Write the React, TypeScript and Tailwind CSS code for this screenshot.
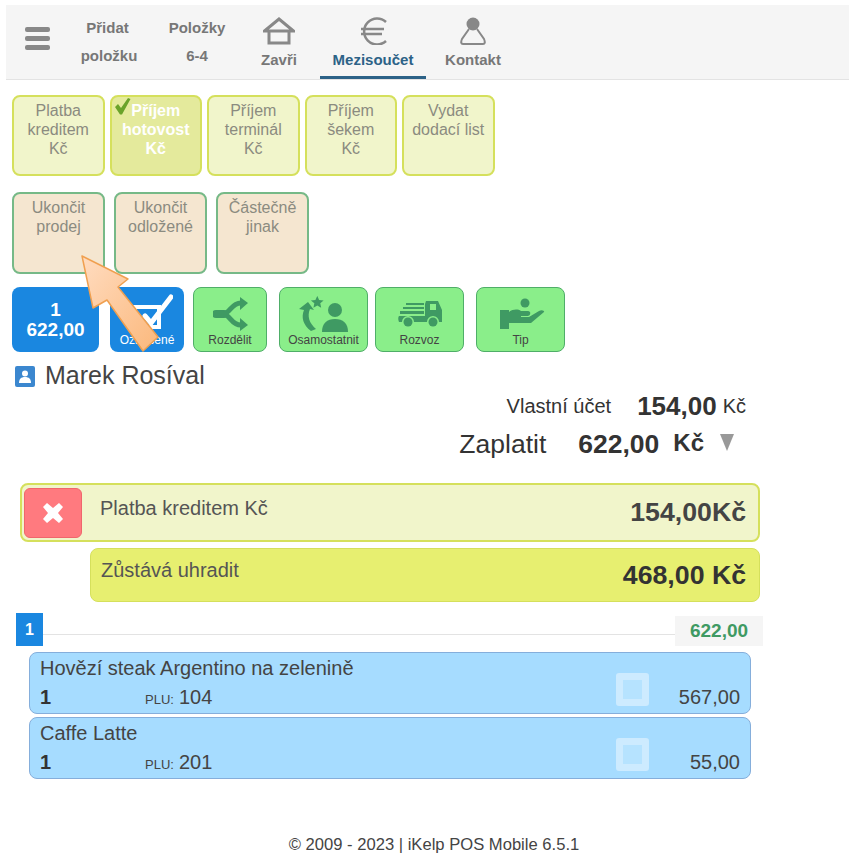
import React from "react";

const payButtons = [
  { lines: ["Platba", "kreditem", "Kč"], active: false },
  { lines: ["Příjem", "hotovost", "Kč"], active: true },
  { lines: ["Příjem", "terminál", "Kč"], active: false },
  { lines: ["Příjem", "šekem", "Kč"], active: false },
  { lines: ["Vydat", "dodací list"], active: false },
];

const finishButtons = [
  ["Ukončit", "prodej"],
  ["Ukončit", "odložené"],
  ["Částečně", "jinak"],
];

const SplitIcon = () => (
  <svg width="35" height="34" viewBox="0 0 35 34" fill="#3f9a63">
    <path d="M3 17H11" stroke="#3f9a63" strokeWidth="8" strokeLinecap="round" />
    <path d="M10 17C17 17 18 6 28 6M10 17C17 17 18 28 28 28" fill="none" stroke="#3f9a63" strokeWidth="5" />
    <path d="M27 0 35 6 27 13zM27 21 35 28 27 34z" />
  </svg>
);

const DetachIcon = () => (
  <svg width="50" height="36" viewBox="0 0 50 36" fill="#3f9a63">
    <path d="M5 14 L0 13 L9 6 L15 14 L11 13 C8 20 10 27 17 33 L12 35 C4 29 2 21 5 14Z" />
    <path d="M17 1l2 4.500 5 .5-3.700 3.300 1 5-4.300-2.600-4.300 2.600 1-5L9.900 6l5-.5z" transform="translate(3 -1) scale(.9)" />
    <circle cx="36" cy="14" r="7" />
    <path d="M23 36c0-9 5-13 13-13s13 4 13 13z" />
  </svg>
);

const TruckIcon = () => (
  <svg width="44" height="26" viewBox="0 0 44 26" fill="#3f9a63">
    <path d="M28 0h12l4 9v12h-3a6 6 0 0 0-12 0H16a6 6 0 0 0-12 0H1c-1-2-1-5 0-6h26V3z" />
    <path d="M8 2h18v2H8zM5 6h21v2H5zM2 10h24v3H2z" />
    <path d="M32 3h6v6h-6z" fill="#8aee8a" />
    <circle cx="10" cy="21" r="4.500" />
    <circle cx="35" cy="21" r="4.500" />
  </svg>
);

const TipIcon = () => (
  <svg className="ml-[4px]" width="46" height="32" viewBox="0 0 46 32" fill="#3f9a63">
    <circle cx="25" cy="5" r="4.500" />
    <path d="M0 12h9v2c4-3 9-3 12-1h7c3 0 3 4 0 5h-7v1h8l10-6c3-2 6 0 5 1L31 25H9v6H0z" />
  </svg>
);

const greenButtons = [
  { label: "Rozdělit", box: "ml-0 w-[74px]", icon: <SplitIcon /> },
  { label: "Osamostatnit", box: "ml-[12px] w-[89px]", icon: <DetachIcon /> },
  { label: "Rozvoz", box: "ml-[7px] w-[89px]", icon: <TruckIcon /> },
  { label: "Tip", box: "ml-[12px] w-[89px]", icon: <TipIcon /> },
];

const items = [
  { name: "Hovězí steak Argentino na zelenině", plu: "104", price: "567,00" },
  { name: "Caffe Latte", plu: "201", price: "55,00" },
];

export default function App() {
  return (
    <div className="relative w-[849px] h-[857px] overflow-hidden bg-white font-['Liberation_Sans',Arial,sans-serif] text-[#333]">
      {/* top menu */}
      <header className="ml-[6px] mt-[5px] flex h-[75px] bg-[#f5f5f5] border-b border-[#e3e3e3] text-[15px] font-bold text-[#777]">
        <div className="w-[64px] pl-[19px] pt-[22px]">
          <div className="flex flex-col gap-[4px]">
            <span className="block h-[5px] w-[25px] rounded-[2px] bg-[#888]" />
            <span className="block h-[5px] w-[25px] rounded-[2px] bg-[#888]" />
            <span className="block h-[5px] w-[25px] rounded-[2px] bg-[#888]" />
          </div>
        </div>
        <div className="w-[78px] pt-[9px] text-center leading-[28px]">
          <div className="-ml-[3px]">Přidat</div>
          <div>položku</div>
        </div>
        <div className="w-[98px] pt-[9px] text-center leading-[28px]">
          <div>Položky</div>
          <div>6-4</div>
        </div>
        <div className="w-[66px] flex flex-col items-center pt-[12px]">
          <svg width="32" height="28" viewBox="0 0 32 28" fill="none" stroke="#888" strokeWidth="3">
            <path d="M1.500 14 16 2l14.500 12z" />
            <path d="M6 14v12h20V14" />
          </svg>
          <div className="mt-[4px]">Zavři</div>
        </div>
        <div className="ml-[8px] w-[106px] flex flex-col items-center border-b-[3px] border-[#2c6287] pt-[12px] text-[#2c6287]">
          <svg width="27" height="28" viewBox="0 0 27 28" fill="none" stroke="#888">
            <path d="M26 5A13 13 0 1 0 26 24" strokeWidth="2.500" />
            <path d="M1 12H24M1 17H22" strokeWidth="2.500" />
          </svg>
          <div className="mt-[4px]">Mezisoučet</div>
        </div>
        <div className="w-[94px] flex flex-col items-center pt-[12px]">
          <svg width="26" height="28" viewBox="0 0 26 28" fill="none">
            <circle cx="13" cy="7" r="6.500" fill="#888" />
            <path d="M9 12 2 22Q0 27 3 27H23Q26 27 24 22L17 12" stroke="#888" strokeWidth="2" />
          </svg>
          <div className="mt-[4px]">Kontakt</div>
        </div>
      </header>

      {/* payment types */}
      <div className="ml-[12px] mt-[15px] flex gap-[5px]">
        {payButtons.map((b, i) => (
          <div
            key={i}
            className={
              b.active
                ? "relative h-[81px] w-[92.500px] rounded-[8px] border-2 border-[#d5e05c] bg-[#e4ea9c] pt-[4px] text-center text-[16px] leading-[19px] font-bold text-white"
                : "h-[81px] w-[92.500px] rounded-[8px] border-2 border-[#d5e05c] bg-[#f1f5cb] pt-[4px] text-center text-[16px] leading-[19px] text-[#8b8b80]"
            }
          >
            {b.active && (
              <svg className="absolute left-[3px] top-[1px]" width="16" height="17" viewBox="0 0 16 17">
                <path d="M0 9 3 6 6 10 13 0 15.500 1 7 16.500H5z" fill="#6aa32a" />
              </svg>
            )}
            {b.lines.map((l) => (
              <div key={l}>{l}</div>
            ))}
          </div>
        ))}
      </div>

      {/* finish */}
      <div className="ml-[12px] mt-[16px] flex gap-[9px]">
        {finishButtons.map((lines) => (
          <div
            key={lines[0] + lines[1]}
            className="h-[82px] w-[93px] rounded-[8px] border-2 border-[#76b987] bg-[#f5e6d0] pt-[4px] text-center text-[16px] leading-[19px] text-[#8b8b80]"
          >
            {lines.map((l) => (
              <div key={l}>{l}</div>
            ))}
          </div>
        ))}
      </div>

      {/* action row */}
      <div className="ml-[12px] mt-[13px] flex h-[65px]">
        <div className="w-[87px] rounded-[8px] bg-[#1a87e0] pt-[13px] text-center text-[19px] leading-[20px] font-bold text-white">
          <div>1</div>
          <div>622,00</div>
        </div>
        <div className="ml-[11px] w-[74px] rounded-[8px] bg-[#1a87e0] flex flex-col items-center text-[12px] text-white">
          <svg className="ml-[6px] mt-[7px]" width="46" height="38" viewBox="0 0 46 38" fill="none" stroke="#fff">
            <path d="M8 13h24v20H8z" strokeWidth="4" />
            <path d="M18 22l6 7L44 3" strokeWidth="5" strokeLinecap="round" />
          </svg>
          <div className="-mt-[1px]">Označené</div>
        </div>
        <div className="ml-[9px] flex">
          {greenButtons.map((b) => (
            <div
              key={b.label}
              className={`${b.box} flex flex-col items-center rounded-[8px] border border-[#4fae68] bg-[#8aee8a] text-[12px] text-[#444]`}
            >
              <div className="flex h-[44px] items-center pt-[8px]">{b.icon}</div>
              <div className="-mt-[1px]">{b.label}</div>
            </div>
          ))}
        </div>
      </div>

      {/* customer */}
      <div className="ml-[15px] mt-[9px] flex h-[30px] items-center gap-[10px]">
        <div className="flex h-[21px] w-[20px] items-end justify-center rounded-[2px] bg-[#3b87cf] pb-[4px]">
          <svg width="12" height="13" viewBox="0 0 12 13" fill="#fff">
            <circle cx="6" cy="3.500" r="3" />
            <path d="M0 13c0-4 2-6 6-6s6 2 6 6z" />
          </svg>
        </div>
        <span className="text-[25px] text-[#444]">Marek Rosíval</span>
      </div>

      {/* totals */}
      <div className="mt-[1px] flex h-[28px] w-[746px] items-center justify-end text-[20px]">
        <span>Vlastní účet</span>
        <span className="ml-[26px] text-[26px] font-bold">154,00</span>
        <span className="ml-[6px]">Kč</span>
      </div>
      <div className="mt-[3px] flex h-[44px] w-[734px] items-center justify-end">
        <span className="text-[26.500px]">Zaplatit</span>
        <span className="ml-[32px] text-[26.500px] font-bold">622,00</span>
        <span className="mb-[5px] ml-[14px] text-[24px] font-bold">Kč</span>
        <svg className="mb-[6px] ml-[16px]" width="14" height="17" viewBox="0 0 14 17">
          <path d="M0 0h14L7 17z" fill="#999" />
        </svg>
      </div>

      {/* payments */}
      <div className="ml-[20px] mt-[16px] flex h-[59px] w-[740px] items-center rounded-[8px] border-2 border-[#d5e05c] bg-[#f1f5cb] pl-[2px] pr-[12px]">
        <div className="flex h-[50px] w-[58px] items-center justify-center rounded-[6px] border border-[#f0666c] bg-[#ff7a7f]">
          <svg width="22" height="22" viewBox="0 0 22 22" fill="#fff">
            <path d="M5 1l6 5 6-5 4 4-5 6 5 6-4 4-6-5-6 5-4-4 5-6-5-6z" />
          </svg>
        </div>
        <span className="ml-[18px] mb-[10px] text-[20px] text-[#555]">Platba kreditem Kč</span>
        <span className="ml-auto text-[26.700px] font-bold text-[#444]">154,00Kč</span>
      </div>
      <div className="ml-[90px] mt-[6px] flex h-[54px] w-[670px] items-center rounded-[8px] border border-[#d5e05c] bg-[#e7ef70] pl-[10px] pr-[13px]">
        <span className="mb-[10px] text-[20px] text-[#555]">Zůstává uhradit</span>
        <span className="ml-auto text-[26.700px] font-bold">468,00 Kč</span>
      </div>

      {/* group */}
      <div className="ml-[16px] mt-[11px] flex h-[33px] w-[747px]">
        <div className="flex h-[33px] w-[27px] items-center justify-center bg-[#1a87e0] text-[16px] font-bold text-white">1</div>
        <div className="mt-[21px] h-px flex-1 bg-[#e3e3e3]" />
        <div className="mt-[3px] flex h-[30px] w-[88px] items-center justify-center bg-[#f5f5f5] text-[19px] font-bold text-[#3f9a63]">622,00</div>
      </div>
      <div className="ml-[29px] mt-[6px] flex w-[722px] flex-col gap-[3px]">
        {items.map((it) => (
          <div key={it.plu} className="relative h-[62px] rounded-[8px] border border-[#85aedb] bg-[#a6dcff] px-[10px] text-[#444]">
            <div className="pt-[2px] text-[20px] leading-[26px]">{it.name}</div>
            <div className="mt-[3px] flex items-baseline text-[20px] leading-[26px]">
              <span className="w-[105px] font-bold text-[#333]">1</span>
              <span className="text-[13px]">PLU:</span>
              <span className="ml-[5px]">{it.plu}</span>
              <span className="ml-auto">{it.price}</span>
            </div>
            <div className="absolute left-[586px] top-[20px] h-[33px] w-[33px] rounded-[3px] border-[7px] border-[#cdebff] bg-[#b6e3ff]" />
          </div>
        ))}
      </div>

      <footer className="mt-[54px] w-[868px] text-center text-[16.600px] text-[#444]">© 2009 - 2023 | iKelp POS Mobile 6.5.1</footer>

      {/* pointer arrow over the buttons */}
      <svg className="absolute left-0 top-0 pointer-events-none" width="200" height="360" viewBox="0 0 200 360">
        <defs>
          <linearGradient id="arrowFill" x1="0" y1="0" x2="1" y2="1">
            <stop offset="0" stopColor="#ffdcc0" />
            <stop offset="1" stopColor="#fbb87c" />
          </linearGradient>
        </defs>
        <path d="M82 256 128 279 118 287 158 337 143 351 107 300 93 308Z" fill="url(#arrowFill)" stroke="#f0a050" strokeWidth="1.500" strokeLinejoin="round" />
      </svg>
    </div>
  );
}
